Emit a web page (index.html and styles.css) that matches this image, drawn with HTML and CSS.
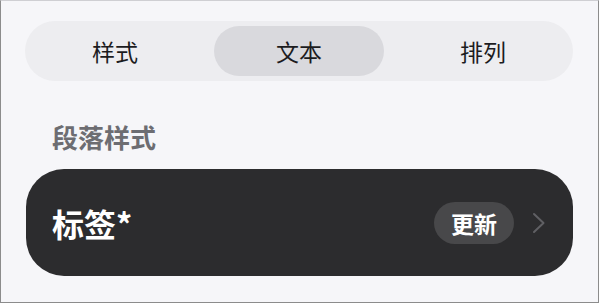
FILE: index.html
```html
<!DOCTYPE html>
<html lang="zh-CN">
<head>
  <meta charset="UTF-8" />
  <meta name="viewport" content="width=device-width, initial-scale=1.0" />
  <title>文本</title>
  <link rel="stylesheet" href="styles.css">
</head>
<body>
  <div class="segmented">
    <button class="segment">样式</button>
    <button class="segment active">文本</button>
    <button class="segment">排列</button>
  </div>

  <div class="section-label">段落样式</div>

  <div class="style-card">
    <span class="style-name">标签*</span>
    <span class="badge">更新</span>
    <svg class="chevron" width="14" height="22" viewBox="0 0 14 22">
      <path d="M2 2 L11.5 11 L2 20" fill="none" stroke="currentColor" stroke-width="2" stroke-linecap="round" stroke-linejoin="round"/>
    </svg>
  </div>
</body>
</html>
```

FILE: styles.css
```css
:root {
  --bg: #f6f6f9;
  --seg-bg: #ededf0;
  --seg-active: #d9d9dd;
  --card-bg: #2c2c2e;
  --badge-bg: #48484a;
  --label: #6d6d72;
  --text: #1c1c1e;
}
* {
  box-sizing: border-box;
}
html, body {
  margin: 0;
  padding: 0;
}
body {
  width: 599px;
  height: 303px;
  overflow: hidden;
  background: var(--bg);
  border: 1px solid #8c8c8c;
  border-top-color: #cfcfd3;
  padding: 20px 25px 0 24px;
  font-family: "Noto Sans CJK SC", "Noto Sans", sans-serif;
  color: var(--text);
}
.segmented {
  height: 60px;
  border-radius: 30px;
  background: var(--seg-bg);
  padding: 5px;
  display: grid;
  grid-template-columns: 1fr 1fr 1fr;
  gap: 14px;
}
.segment {
  border: none;
  background: transparent;
  border-radius: 25px;
  font-family: inherit;
  font-size: 23px;
  color: var(--text);
  padding: 0;
  line-height: 50px;
}
.segment.active {
  background: var(--seg-active);
}
.section-label {
  margin: 41px 0 0 27px;
  font-size: 26px;
  line-height: 30px;
  font-weight: 700;
  color: var(--label);
}
.style-card {
  margin: 17px 0 0 1px;
  height: 107px;
  border-radius: 38px;
  background: var(--card-bg);
  display: flex;
  align-items: center;
  padding: 0 27px 0 26px;
}
.style-name {
  flex: 1;
  font-size: 32px;
  font-weight: 700;
  color: #ffffff;
}
.badge {
  width: 80px;
  height: 42px;
  border-radius: 21px;
  background: var(--badge-bg);
  color: #ffffff;
  font-size: 23px;
  font-weight: 700;
  display: flex;
  align-items: center;
  justify-content: center;
}
.chevron {
  margin-left: 18px;
  color: #606064;
}
```
